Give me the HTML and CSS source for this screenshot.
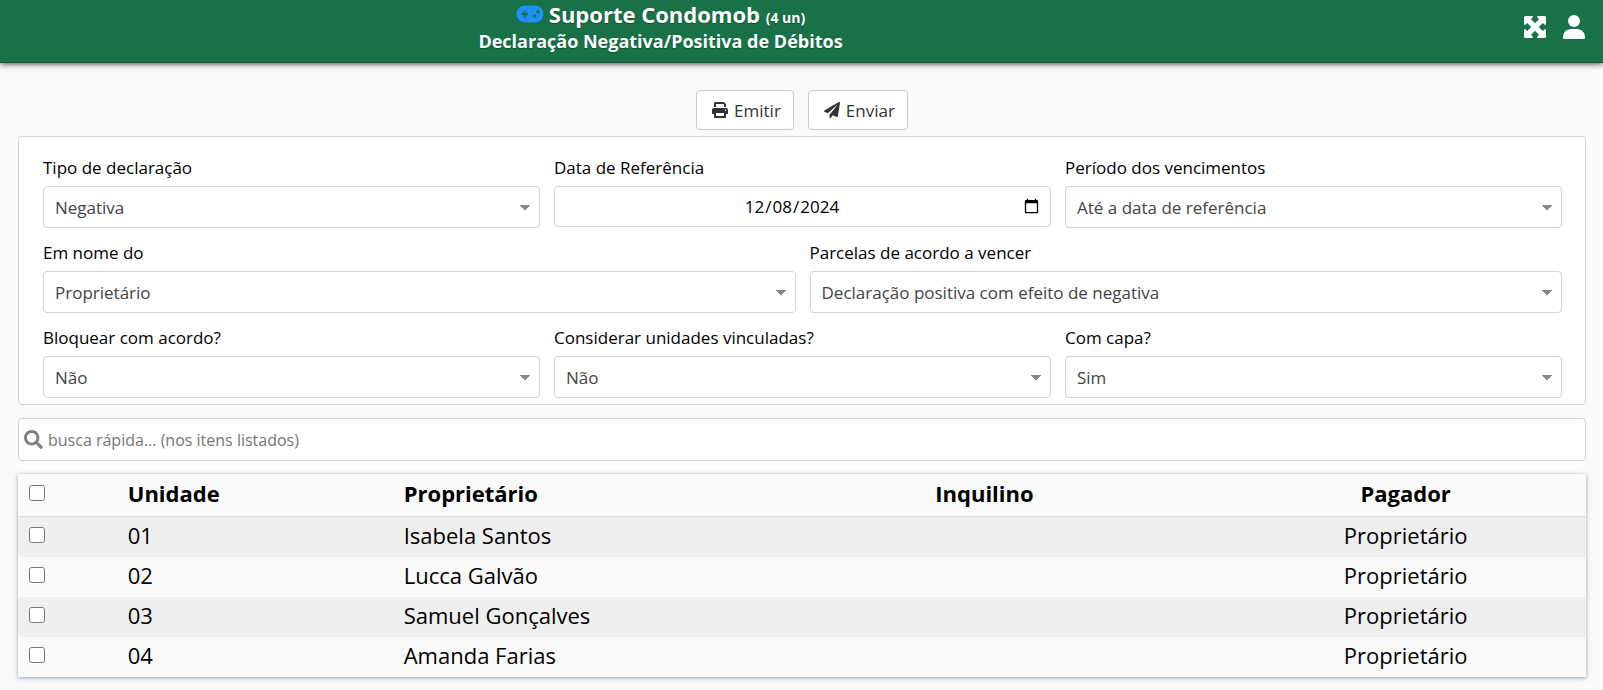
FILE: index.html
```html
<!DOCTYPE html>
<html lang="pt-BR">
<head>
<meta charset="utf-8">
<meta name="viewport" content="width=device-width, initial-scale=1">
<title>Declaração Negativa/Positiva de Débitos</title>
<link rel="stylesheet" href="styles.css">
</head>
<body>
<header class="topbar">
  <div class="topbar-title">
    <h1 class="title">
      <svg class="icon-game" viewBox="0 0 28 18" aria-hidden="true"><path fill="#1e90ff" fill-rule="evenodd" d="M9 0.500h10a8.500 8.500 0 0 1 0 17H9a8.500 8.500 0 0 1 0-17zM7.600 5.500v2.300H5.300v2.400h2.300v2.300h2v-2.300h2.300V7.800H9.600V5.500zM18.500 9.300a1.800 1.800 0 1 0 0 3.600 1.800 1.800 0 0 0 0-3.600zM22 5.100a1.800 1.800 0 1 0 0 3.600 1.800 1.800 0 0 0 0-3.600z"/></svg>
      <span>Suporte Condomob <small class="units">(4 un)</small></span>
    </h1>
    <h2 class="subtitle">Declaração Negativa/Positiva de Débitos</h2>
  </div>
  <nav class="topbar-actions">
    <button class="icon-button" type="button" aria-label="Tela cheia"><svg class="icon-expand" viewBox="0 0 22 22" aria-hidden="true"><path fill="#fff" d="M1 0h7.500l.5 1-2 2.200L11 7.200l4-4L13 1l.5-1H21l1 1v7.500l-1 .5-2.200-2-4 4 4 4 2.200-2 1 .5V21l-1 1h-7.500l-.5-1 2-2.200-4-4-4 4L9 21l-.5 1H1l-1-1v-7.500l1-.5 2.200 2 4-4-4-4L1 9l-1-.5V1z"/></svg></button>
    <button class="icon-button" type="button" aria-label="Usuário"><svg class="icon-user" viewBox="0 0 22 24" aria-hidden="true"><circle cx="11" cy="6" r="6" fill="#fff"/><path fill="#fff" d="M0 22.500C0 17.500 3.500 14 8 14h6c4.500 0 8 3.500 8 8.500 0 1-.5 1.500-1.500 1.500h-19C.5 24 0 23.500 0 22.500z"/></svg></button>
  </nav>
</header>
<main class="content">
  <div class="actions">
    <button class="button" type="button"><svg class="icon-button-glyph" viewBox="0 0 512 512" aria-hidden="true"><path fill="#333" fill-rule="evenodd" d="M64 160V48C64 20 84 0 112 0h270l66 66v94h-64V80l-24-16H128v96zM64 192h384c36 0 64 28 64 64v112c0 9-7 16-16 16h-48v96c0 18-14 32-32 32H96c-18 0-32-14-32-32v-96H16c-9 0-16-7-16-16V256c0-36 28-64 64-64zm64 160v96h256v-96zm304-112a24 24 0 1 0 0 48 24 24 0 0 0 0-48z"/></svg>Emitir</button>
    <button class="button" type="button"><svg class="icon-button-glyph" viewBox="0 0 512 512" aria-hidden="true"><path fill="#333" d="M476 3.200L12.500 270.600c-18.100 10.400-15.800 35.600 2.200 43.200L121 358.400l287.300-253.200c5.500-4.900 13.300 2.600 8.600 8.300L176 407v80.500c0 23.600 28.500 32.900 42.500 15.800L282 426l124.600 52.200c14.200 6 30.400-2.900 33-18.200l72-432C515 7.800 493.300-6.800 476 3.200z"/></svg>Enviar</button>
  </div>
  <form class="panel">
    <div class="row">
      <div class="field"><label class="label" for="tipo">Tipo de declaração</label><select class="control select" id="tipo"><option>Negativa</option></select></div>
      <div class="field"><label class="label" for="data">Data de Referência</label><input class="control date" id="data" type="date" value="2024-12-08"></div>
      <div class="field"><label class="label" for="periodo">Período dos vencimentos</label><select class="control select" id="periodo"><option>Até a data de referência</option></select></div>
    </div>
    <div class="row">
      <div class="field"><label class="label" for="nome">Em nome do</label><select class="control select" id="nome"><option>Proprietário</option></select></div>
      <div class="field"><label class="label" for="parcelas">Parcelas de acordo a vencer</label><select class="control select" id="parcelas"><option>Declaração positiva com efeito de negativa</option></select></div>
    </div>
    <div class="row">
      <div class="field"><label class="label" for="bloquear">Bloquear com acordo?</label><select class="control select" id="bloquear"><option>Não</option></select></div>
      <div class="field"><label class="label" for="vinculadas">Considerar unidades vinculadas?</label><select class="control select" id="vinculadas"><option>Não</option></select></div>
      <div class="field"><label class="label" for="capa">Com capa?</label><select class="control select" id="capa"><option>Sim</option></select></div>
    </div>
  </form>
  <div class="search">
    <svg class="icon-search" viewBox="0 0 512 512" aria-hidden="true"><path fill="#808080" d="M505 442.700L405.300 343c-4.500-4.500-10.600-7-17-7H372c27.600-35.300 44-79.700 44-128C416 93.100 322.900 0 208 0S0 93.100 0 208s93.100 208 208 208c48.300 0 92.700-16.400 128-44v16.300c0 6.400 2.500 12.500 7 17l99.700 99.700c9.400 9.400 24.600 9.400 33.900 0l28.300-28.300c9.400-9.400 9.400-24.600.1-34zM208 336c-70.700 0-128-57.200-128-128 0-70.700 57.200-128 128-128 70.700 0 128 57.200 128 128 0 70.700-57.200 128-128 128z"/></svg>
    <input class="search-input" type="text" aria-label="Busca rápida" placeholder="busca rápida... (nos itens listados)">
  </div>
  <table class="table">
    <colgroup><col class="col-check"><col class="col-unit"><col class="col-owner"><col class="col-tenant"><col class="col-payer"></colgroup>
    <thead>
      <tr><th><input class="check" type="checkbox" aria-label="Selecionar todas"></th><th>Unidade</th><th>Proprietário</th><th>Inquilino</th><th class="center">Pagador</th></tr>
    </thead>
    <tbody>
      <tr><td><input class="check" type="checkbox" aria-label="Selecionar 01"></td><td>01</td><td>Isabela Santos</td><td></td><td class="center">Proprietário</td></tr>
      <tr><td><input class="check" type="checkbox" aria-label="Selecionar 02"></td><td>02</td><td>Lucca Galvão</td><td></td><td class="center">Proprietário</td></tr>
      <tr><td><input class="check" type="checkbox" aria-label="Selecionar 03"></td><td>03</td><td>Samuel Gonçalves</td><td></td><td class="center">Proprietário</td></tr>
      <tr><td><input class="check" type="checkbox" aria-label="Selecionar 04"></td><td>04</td><td>Amanda Farias</td><td></td><td class="center">Proprietário</td></tr>
    </tbody>
  </table>
</main>
</body>
</html>
```
FILE: styles.css
```css
*, *::before, *::after { box-sizing: border-box; }

body {
  margin: 0;
  background: #fafafa;
  color: #000;
  font-family: "Open Sans", "Noto Sans", sans-serif;
  font-size: 17px;
}

button, input, select { font: inherit; }

.topbar {
  display: flex;
  padding-bottom: 8px;
  background: #187147;
  border-bottom: 1px solid #125736;
  box-shadow: 0 1px 6px rgba(0, 0, 0, 0.7);
  color: #fff;
  text-shadow: 0 1px 1px rgba(0, 0, 0, 0.3);
}

.topbar-title {
  flex: 1;
  padding-left: 282px;
  margin-left: -282px;
  text-align: center;
}

.title {
  display: flex;
  align-items: center;
  justify-content: center;
  gap: 5px;
  margin: 0;
  font-size: 22px;
  line-height: 28px;
}

.units { font-size: 14px; line-height: 1; }

.subtitle {
  margin: 0;
  font-size: 18px;
  line-height: 26px;
}

.topbar-actions {
  display: flex;
  flex: 0 0 282px;
  align-items: center;
  justify-content: flex-end;
  gap: 17px;
  padding: 0 18px 0 0;
}

.icon-button {
  display: flex;
  padding: 0;
  border: 0;
  background: none;
}

.icon-game { width: 28px; height: 18px; }
.icon-expand { width: 22px; height: 22px; }
.icon-user { width: 22px; height: 24px; }

.content { padding: 27px 17px 12px 18px; }

.actions {
  display: flex;
  justify-content: center;
  gap: 14px;
  margin-bottom: 6px;
}

.button {
  display: flex;
  align-items: center;
  gap: 6px;
  height: 40px;
  padding: 0 12px 0 15px;
  border: 1px solid #ccc;
  border-radius: 4px;
  background: #fff;
  color: #333;
  font-size: 17px;
}

.icon-button-glyph { width: 16px; height: 16px; }

.panel {
  display: flex;
  flex-direction: column;
  gap: 12px;
  padding: 18px 23px 6px 24px;
  border: 1px solid #ced4da;
  border-radius: 4px;
  background: #fff;
}

.row { display: flex; gap: 14px; }

.field {
  display: flex;
  flex: 1 1 0;
  flex-direction: column;
  align-items: stretch;
}

.label { line-height: 26px; padding-bottom: 5px; }

.control {
  width: 100%;
  height: 42px;
  border: 1px solid #ced4da;
  border-radius: 4px;
  background: #fff;
}

.select {
  appearance: none;
  padding: 0 28px 0 11px;
  background-image:
    linear-gradient(to bottom right, #888 50%, transparent 51%),
    linear-gradient(to bottom left, #888 50%, transparent 51%);
  background-position: right 9px top 18px, right 14px top 18px;
  background-repeat: no-repeat;
  background-size: 5px 6px;
  color: #444;
}

.date {
  height: 41px;
  padding: 0 8px;
  text-align: center;
}

.search {
  display: flex;
  align-items: center;
  gap: 5px;
  height: 43px;
  margin: 13px 0;
  padding-left: 5px;
  border: 1px solid #ced4da;
  border-radius: 4px;
  background: #fff;
}

.icon-search { width: 19px; height: 19px; }

.search-input {
  flex: 1;
  padding: 0;
  border: 0;
  outline: 0;
  background: none;
  font-size: 16px;
}

.search-input::placeholder { color: #757575; }

.table {
  width: 100%;
  table-layout: fixed;
  border-collapse: collapse;
  box-shadow: 0 1px 4px rgba(75, 100, 130, 0.6);
  background: #fafafa;
  font-size: 22px;
  line-height: 30px;
}

.col-check { width: 7%; }
.col-unit { width: 17.6%; }
.col-owner { width: 33.9%; }
.col-tenant { width: 18.5%; }
.col-payer { width: 23%; }

.table th, .table td {
  height: 40px;
  padding: 3px 0 7px;
  text-align: left;
}

.table thead th { height: 42px; border-bottom: 1px solid #dcdcdc; }

.table tbody tr:nth-child(odd) { background: #efefef; }

.table .center { text-align: center; }

.check {
  display: block;
  width: 16px;
  height: 16px;
  margin: 0 0 0 11px;
}
```
